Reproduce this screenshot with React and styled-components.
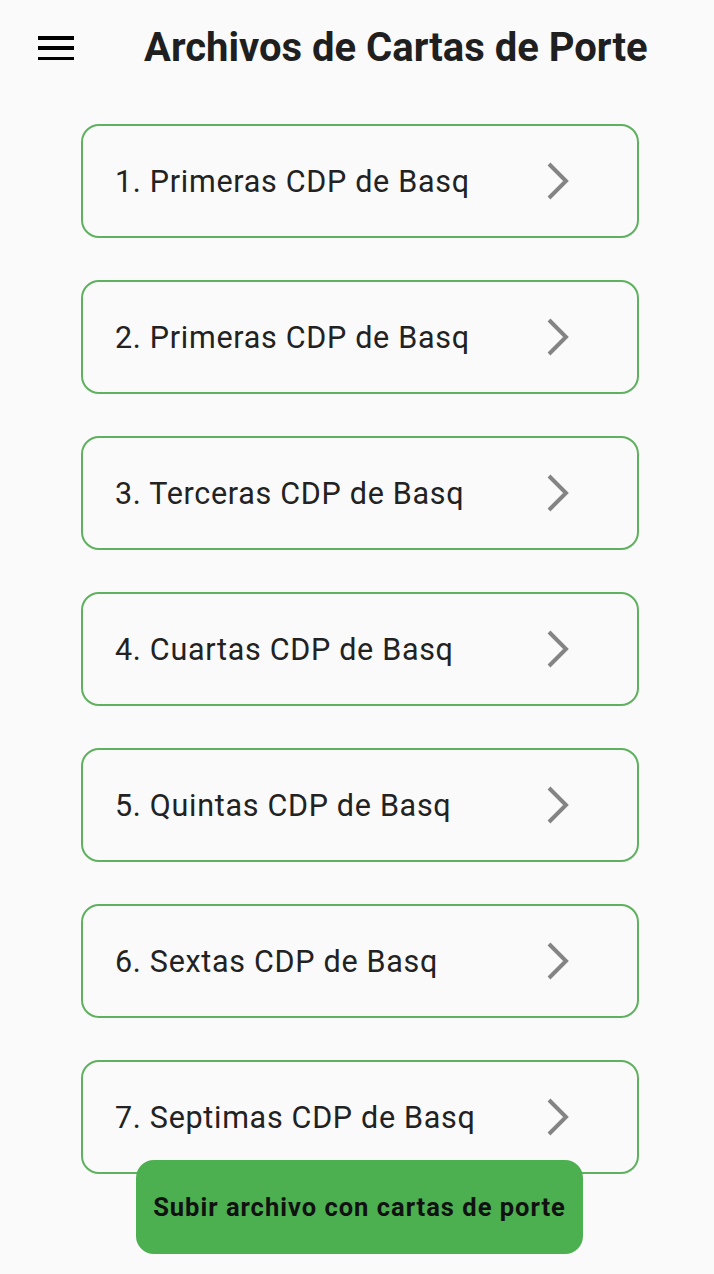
import React from "react";
import styled, { createGlobalStyle } from "styled-components";

const GlobalStyle = createGlobalStyle`
  html, body {
    margin: 0;
    padding: 0;
    background: #fafafa;
  }
  body {
    font-family: Roboto, "Noto Sans", "Liberation Sans", sans-serif;
  }
`;

const Page = styled.div`
  width: 714px;
  height: 1274px;
  position: relative;
  overflow: hidden;
  background: #fafafa;
`;

const Header = styled.header`
  height: 96px;
  display: flex;
  align-items: center;
  padding: 0 0 0 38px;
  box-sizing: border-box;
`;

const MenuButton = styled.button`
  width: 36px;
  height: 24px;
  padding: 0;
  border: none;
  background: none;
  display: flex;
  flex-direction: column;
  justify-content: space-between;

  span {
    display: block;
    height: 3.5px;
    background: #000;
  }
`;

const Title = styled.h1`
  margin: 0 0 0 70px;
  font-size: 40px;
  line-height: 1;
  font-weight: 700;
  color: #1f1f1f;
`;

const List = styled.ul`
  list-style: none;
  margin: 0;
  padding: 28px 0 0 81px;
  display: flex;
  flex-direction: column;
  gap: 42px;
`;

const Card = styled.li`
  width: 558px;
  height: 114px;
  box-sizing: border-box;
  border: 2px solid #5fb05f;
  border-radius: 18px;
  display: grid;
  grid-template-columns: 431px 30px;
  align-items: center;
  padding-left: 32px;
`;

const Label = styled.span`
  font-size: 30.5px;
  letter-spacing: 0.7px;
  color: #222;
`;

const Chevron = () => (
  <svg width="30" height="40" viewBox="0 0 30 40">
    <polyline
      points="3,3 20,20 3,37"
      fill="none"
      stroke="#848484"
      strokeWidth="4"
    />
  </svg>
);

const UploadButton = styled.button`
  position: absolute;
  left: 136px;
  top: 1160px;
  width: 447px;
  height: 94px;
  border: none;
  border-radius: 18px;
  background: #4caf50;
  color: #111;
  font-family: Roboto, "Liberation Sans", sans-serif;
  font-size: 25.5px;
  font-weight: 700;
  letter-spacing: 1px;
`;

const items = [
  "1. Primeras CDP de Basq",
  "2. Primeras CDP de Basq",
  "3. Terceras CDP de Basq",
  "4. Cuartas CDP de Basq",
  "5. Quintas CDP de Basq",
  "6. Sextas CDP de Basq",
  "7. Septimas CDP de Basq",
];

export default function App() {
  return (
    <Page>
      <GlobalStyle />
      <Header>
        <MenuButton>
          <span />
          <span />
          <span />
        </MenuButton>
        <Title>Archivos de Cartas de Porte</Title>
      </Header>
      <List>
        {items.map((t) => (
          <Card key={t}>
            <Label>{t}</Label>
            <Chevron />
          </Card>
        ))}
      </List>
      <UploadButton>Subir archivo con cartas de porte</UploadButton>
    </Page>
  );
}
